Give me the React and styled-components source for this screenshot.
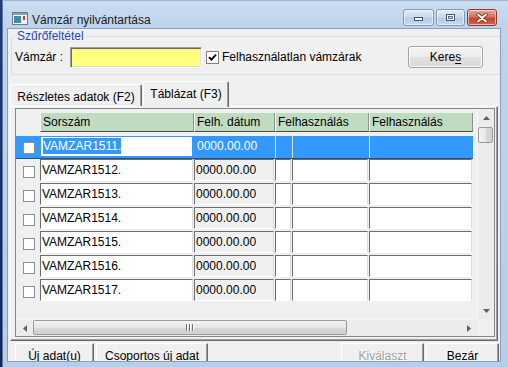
import React from "react";
import styled, { createGlobalStyle, css } from "styled-components";

const GlobalStyle = createGlobalStyle`
  html, body { margin: 0; padding: 0; }
  body {
    background: #1b2d62;
    font-family: "Liberation Sans", Arial, sans-serif;
    font-size: 12px;
    color: #000;
  }
  * { box-sizing: border-box; }
`;

const Desktop = styled.div`
  width: 508px;
  height: 367px;
  overflow: hidden;
  display: flex;
  padding-left: 2px;
  background: linear-gradient(#22397a, #142458);
`;

const Window = styled.div`
  flex: 1;
  display: flex;
  flex-direction: column;
  background: linear-gradient(to bottom, #cadcf0 0, #bcd3eb 28px, #b7cee9 100%);
  border-left: 1px solid #5d77a0;
  border-top: 1px solid #9fb4cf;
`;

const TitleBar = styled.div`
  flex: none;
  height: 28px;
  display: flex;
  align-items: flex-start;
  padding: 0 11px 0 9px;
`;

const TitleIcon = styled.svg`
  margin-top: 11px;
  flex: none;
`;

const TitleText = styled.div`
  margin: 12px 0 0 4px;
  font-size: 12px;
  line-height: 14px;
  color: #1b1b1b;
  flex: 1;
`;

const Controls = styled.div`
  display: flex;
  gap: 2px;
  margin-top: 8px;
`;

const CtrlBtn = styled.div`
  width: ${(p) => p.$w}px;
  height: 17px;
  border-radius: 3px;
  display: flex;
  align-items: center;
  justify-content: center;
  border: 1px solid ${(p) => (p.$close ? "#8c3a2e" : "#8198b8")};
  background: ${(p) =>
    p.$close
      ? "linear-gradient(#eaa596 0, #d9735f 45%, #c4442f 55%, #d3654c 100%)"
      : "linear-gradient(#e3ecf7 0, #cbdaee 45%, #b7cbe5 55%, #c7d8ee 100%)"};
  box-shadow: inset 0 0 0 1px rgba(255, 255, 255, 0.55);
`;

const ClientRow = styled.div`
  flex: none;
  display: flex;
  padding: 0 8px 0 5px;
`;

const Client = styled.div`
  width: 492px;
  height: 332px;
  background: #f0f0f0;
  overflow: hidden;
  display: flex;
  flex-direction: column;
  box-shadow: 0 0 0 1px #8a9fbd;
  & > * { flex: none; }
`;

const Group = styled.div`
  position: relative;
  margin: 7px 0 0 3px;
  width: 510px;
  height: 39px;
  border: 1px solid #d5dfe5;
  border-radius: 3px;
  padding: 9px 0 0 3px;
`;

const Legend = styled.span`
  position: absolute;
  top: -8px;
  left: 3px;
  padding: 0 2px;
  background: #f0f0f0;
  color: #1f44b8;
  line-height: 14px;
`;

const FilterRow = styled.div`
  display: flex;
  align-items: center;
  height: 22px;
`;

const FieldLabel = styled.span`
  width: 55px;
  line-height: 14px;
`;

const YellowInput = styled.div`
  width: 132px;
  height: 21px;
  background: #ffff80;
  border-top: 1px solid #a0a0a0;
  border-left: 1px solid #a0a0a0;
  border-right: 1px solid #fff;
  border-bottom: 1px solid #fff;
  box-shadow: inset 1px 1px 0 #696969, inset -1px -1px 0 #e3e3e3;
`;

const Check = styled.div`
  width: ${(p) => p.$size || 13}px;
  height: ${(p) => p.$size || 13}px;
  margin-left: ${(p) => p.$ml || 0}px;
  margin-top: ${(p) => p.$mt || 0}px;
  background: #fff;
  border: 1px solid ${(p) => p.$border || "#8f8f8f"};
  display: flex;
  align-items: center;
  justify-content: center;
  flex: none;
`;

const CheckLabel = styled.span`
  margin-left: 3px;
  width: 186px;
  line-height: 14px;
  white-space: nowrap;
`;

const PushButton = styled.div`
  width: 75px;
  height: 22px;
  border: 1px solid #a3a3a3;
  border-radius: 3px;
  background: linear-gradient(#f4f4f4 0, #ececec 50%, #e1e1e1 51%, #d9d9d9 100%);
  box-shadow: inset 0 0 0 1px #fbfbfb;
  display: flex;
  align-items: center;
  justify-content: center;
  line-height: 14px;
  u { text-decoration: underline; text-underline-offset: 2px; }
`;

const TabStrip = styled.div`
  display: flex;
  align-items: flex-start;
  margin: 6px 0 -1px 2px;
  height: 26px;
  position: relative;
  z-index: 1;
`;

const Tab = styled.div`
  background: #f0f0f0;
  border-top: 1px solid #fff;
  border-left: 1px solid #fff;
  border-right: 1px solid #696969;
  box-shadow: inset -1px 0 0 #a0a0a0;
  border-radius: 2px 2px 0 0;
  text-align: center;
  line-height: 14px;
  white-space: nowrap;
  ${(p) =>
    p.$active
      ? css`
          width: 86px;
          height: 26px;
          padding-top: 5px;
          margin-left: 1px;
        `
      : css`
          width: 132px;
          height: 22px;
          margin-top: 3px;
          padding-top: 5px;
        `}
`;

const Panel = styled.div`
  margin-left: 2px;
  width: 488px;
  height: 235px;
  border-top: 1px solid #fff;
  border-left: 1px solid #fff;
  border-right: 1px solid #696969;
  border-bottom: 1px solid #696969;
  box-shadow: inset -1px -1px 0 #a0a0a0;
  padding: 1px 2px 3px 4px;
`;

const Grid = styled.div`
  width: 480px;
  height: 229px;
  border: 1px solid #828790;
  background: #f0f0f0;
  display: grid;
  grid-template-columns: 1fr 17px;
  grid-template-rows: 1fr 17px;
`;

const Body = styled.div`
  overflow: hidden;
  display: flex;
  flex-direction: column;
  & > * { flex: none; }
`;

const HeaderRow = styled.div`
  height: 26px;
  padding-top: 4px;
  display: grid;
  grid-template-columns: 24px 154px 81px 94px 104px;
  align-items: start;
`;

const HeadCell = styled.div`
  height: 19px;
  background: ${(p) => (p.$blank ? "transparent" : "#c0dcc0")};
  ${(p) =>
    !p.$blank &&
    css`
      border-left: 1px solid #f4fbf4;
      border-right: 1px solid #8a968a;
      border-bottom: 1px solid #4a4a4a;
    `}
  padding-left: 2px;
  line-height: 18px;
  white-space: nowrap;
  overflow: hidden;
`;

const Row = styled.div`
  height: 24px;
  display: grid;
  grid-template-columns: 24px 154px 81px 17px 77px 104px;
  ${(p) =>
    p.$selected &&
    css`
      background: #3399ff;
      width: 457px;
      box-shadow: inset 0 -1px 0 #2b4f7e, inset 0 1px 0 #e8f2ff;
    `}
`;

const CheckCol = styled.div`
  display: flex;
  justify-content: center;
  padding-top: 6px;
  padding-left: 1px;
`;

const Cell = styled.div`
  height: 22px;
  margin-right: 1px;
  padding-left: 1px;
  line-height: 21px;
  white-space: nowrap;
  overflow: hidden;
  border-top: 1px solid #6d6d6d;
  border-left: 1px solid #6d6d6d;
  border-right: 1px solid #dcdcdc;
  border-bottom: 1px solid #fff;
  background: ${(p) => (p.$gray ? "#f0f0f0" : "#fff")};
`;

const SelCell = styled.div`
  height: 23px;
  line-height: 22px;
  padding-left: 2px;
  color: #fff;
  border-left: 1px solid ${(p) => (p.$edge ? "#cfe6ff" : "transparent")};
  white-space: nowrap;
`;

const Editor = styled.div`
  margin: 2px 2px 2px 1px;
  height: 19px;
  background: #fff;
  padding-left: 2px;
  line-height: 19px;
`;

const Highlight = styled.span`
  background: #3399ff;
  color: #fff;
  padding: 1px 0;
`;

const VScroll = styled.div`
  display: flex;
  flex-direction: column;
  background: #ececec;
  border-left: 1px solid #f6f6f6;
`;

const HScroll = styled.div`
  display: flex;
  background: #ececec;
  border-top: 1px solid #f6f6f6;
`;

const Corner = styled.div`
  background: #f0f0f0;
`;

const Arrow = styled.div`
  flex: none;
  width: ${(p) => (p.$h ? 17 : 16)}px;
  height: ${(p) => (p.$h ? 16 : 17)}px;
  display: flex;
  align-items: center;
  justify-content: center;
`;

const Thumb = styled.div`
  flex: none;
  border: 1px solid #9b9b9b;
  border-radius: 2px;
  display: flex;
  align-items: center;
  justify-content: center;
  ${(p) =>
    p.$h
      ? css`
          width: 314px;
          height: 15px;
          background: linear-gradient(#f4f4f4, #e6e6e6 50%, #d8d8d8 51%, #d0d0d0);
        `
      : css`
          width: 15px;
          height: 16px;
          margin: 1px 0 0 0;
          background: linear-gradient(to right, #f4f4f4, #e6e6e6 50%, #d8d8d8 51%, #d0d0d0);
        `}
`;

const Track = styled.div`
  flex: 1;
`;

const ButtonBar = styled.div`
  display: flex;
  margin-top: 2px;
  padding: 0 1px 0 7px;
  gap: 2px;
`;

const BarButton = styled.div`
  width: ${(p) => p.$w}px;
  height: 25px;
  margin-left: ${(p) => (p.$push ? "auto" : "0")};
  border-top: 1px solid #fff;
  border-left: 1px solid #fff;
  border-right: 1px solid #6a6a6a;
  box-shadow: inset -1px 0 0 #a0a0a0;
  text-align: center;
  line-height: 24px;
  white-space: nowrap;
  color: ${(p) => (p.$disabled ? "#a0a0a0" : "#000")};
  text-shadow: ${(p) => (p.$disabled ? "1px 1px 0 #fff" : "none")};
`;

const ArrowGlyph = ({ dir }) => {
  const pts = {
    up: "0,4 3.5,0 7,4",
    down: "0,0 3.5,4 7,0",
    left: "4,0 0,3.5 4,7",
    right: "0,0 4,3.5 0,7",
  }[dir];
  const vertical = dir === "up" || dir === "down";
  return (
    <svg width={vertical ? 7 : 4} height={vertical ? 4 : 7} viewBox={vertical ? "0 0 7 4" : "0 0 4 7"}>
      <polygon points={pts} fill="#5f5f5f" />
    </svg>
  );
};

const Grip = () => (
  <svg width="8" height="7" viewBox="0 0 8 7">
    {[0, 3, 6].map((x) => (
      <g key={x}>
        <rect x={x} y="0" width="1" height="7" fill="#6f6f6f" />
        <rect x={x + 1} y="0" width="1" height="7" fill="#fff" />
      </g>
    ))}
  </svg>
);

const CheckMark = () => (
  <svg width="9" height="9" viewBox="0 0 9 9">
    <path d="M1 4.2 L3.4 6.6 L8 1.6" stroke="#000" strokeWidth="1.9" fill="none" />
  </svg>
);

const rows = [1511, 1512, 1513, 1514, 1515, 1516, 1517];

export default function App() {
  return (
    <>
      <GlobalStyle />
      <Desktop>
        <Window>
          <TitleBar>
            <TitleIcon width="16" height="13" viewBox="0 0 16 13">
              <rect x="0.5" y="0.5" width="15" height="12" fill="#f5f5f5" stroke="#6d7a88" />
              <rect x="1" y="1" width="14" height="2" fill="#8aa0b8" />
              <rect x="2" y="4" width="7" height="7" fill="#3b8fa5" />
              <rect x="11" y="4" width="2" height="4" fill="#d23a3a" />
            </TitleIcon>
            <TitleText>Vámzár nyilvántartása</TitleText>
            <Controls>
              <CtrlBtn $w={31}>
                <svg width="11" height="9" viewBox="0 0 11 9">
                  <rect x="1.5" y="4.5" width="8" height="3" fill="#fff" stroke="#3d587f" />
                </svg>
              </CtrlBtn>
              <CtrlBtn $w={29}>
                <svg width="11" height="9" viewBox="0 0 11 9">
                  <rect x="1.5" y="1.5" width="8" height="6" fill="#fff" stroke="#3d587f" />
                  <rect x="3.5" y="3.5" width="4" height="2" fill="#c9d9ee" stroke="#3d587f" strokeWidth="0.8" />
                </svg>
              </CtrlBtn>
              <CtrlBtn $w={30} $close>
                <svg width="12" height="10" viewBox="0 0 12 10">
                  <path d="M2 1.5 L10 8.5 M10 1.5 L2 8.5" stroke="#6b2016" strokeWidth="3.4" strokeLinecap="round" />
                  <path d="M2 1.5 L10 8.5 M10 1.5 L2 8.5" stroke="#fff" strokeWidth="1.9" strokeLinecap="round" />
                </svg>
              </CtrlBtn>
            </Controls>
          </TitleBar>
          <ClientRow>
            <Client>
              <Group>
                <Legend>Szűrőfeltétel</Legend>
                <FilterRow>
                  <FieldLabel>Vámzár :</FieldLabel>
                  <YellowInput />
                  <Check $ml={4} $border="#808080">
                    <CheckMark />
                  </Check>
                  <CheckLabel>Felhasználatlan vámzárak</CheckLabel>
                  <PushButton>
                    Kere<u>s</u>
                  </PushButton>
                </FilterRow>
              </Group>

              <TabStrip>
                <Tab>Részletes adatok (F2)</Tab>
                <Tab $active>Táblázat (F3)</Tab>
              </TabStrip>

              <Panel>
                <Grid>
                  <Body>
                    <HeaderRow>
                      <HeadCell $blank />
                      <HeadCell>Sorszám</HeadCell>
                      <HeadCell>Felh. dátum</HeadCell>
                      <HeadCell>Felhasználás</HeadCell>
                      <HeadCell>Felhasználás</HeadCell>
                    </HeaderRow>
                    {rows.map((n, i) =>
                      i === 0 ? (
                        <Row key={n} $selected>
                          <CheckCol>
                            <Check $size={12} $mt={1} />
                          </CheckCol>
                          <Editor>
                            <Highlight>VAMZAR{n}.</Highlight>
                          </Editor>
                          <SelCell>0000.00.00</SelCell>
                          <SelCell $edge />
                          <SelCell $edge />
                          <SelCell $edge />
                        </Row>
                      ) : (
                        <Row key={n}>
                          <CheckCol>
                            <Check $size={12} $mt={1} />
                          </CheckCol>
                          <Cell>VAMZAR{n}.</Cell>
                          <Cell $gray>0000.00.00</Cell>
                          <Cell />
                          <Cell />
                          <Cell />
                        </Row>
                      )
                    )}
                  </Body>
                  <VScroll>
                    <Arrow>
                      <ArrowGlyph dir="up" />
                    </Arrow>
                    <Thumb />
                    <Track />
                    <Arrow>
                      <ArrowGlyph dir="down" />
                    </Arrow>
                  </VScroll>
                  <HScroll>
                    <Arrow $h>
                      <ArrowGlyph dir="left" />
                    </Arrow>
                    <Thumb $h>
                      <Grip />
                    </Thumb>
                    <Track />
                    <Arrow $h>
                      <ArrowGlyph dir="right" />
                    </Arrow>
                  </HScroll>
                  <Corner />
                </Grid>
              </Panel>

              <ButtonBar>
                <BarButton $w={79}>Új adat(u)</BarButton>
                <BarButton $w={112}>Csoportos új adat</BarButton>
                <BarButton $w={83} $push $disabled>
                  Kiválaszt
                </BarButton>
                <BarButton $w={73}>Bezár</BarButton>
              </ButtonBar>
            </Client>
          </ClientRow>
        </Window>
      </Desktop>
    </>
  );
}
